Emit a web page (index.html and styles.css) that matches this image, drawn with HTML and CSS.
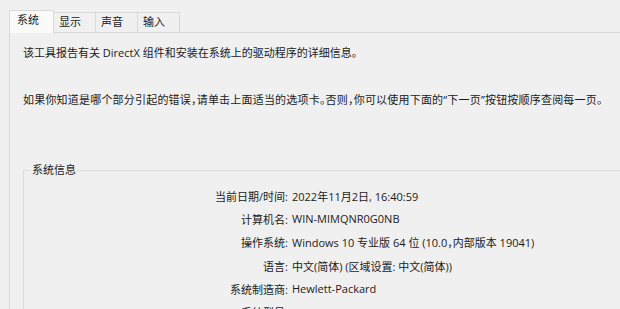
FILE: index.html
```html
<!DOCTYPE html>
<html lang="zh-CN">
<head>
    <meta charset="UTF-8">
    <title>DirectX 诊断工具</title>
    <link rel="stylesheet" href="styles.css">
</head>
<body>
    <div class="window">
        <div class="tabs">
            <div class="tab active">系统</div>
            <div class="tab">显示</div>
            <div class="tab">声音</div>
            <div class="tab">输入</div>
        </div>
        <div class="panel">
            <p class="intro">该工具报告有关 DirectX 组件和安装在系统上的驱动程序的详细信息。</p>
            <p class="intro second">如果你知道是哪个部分引起的错误，请单击上面适当的选项卡。否则，你可以使用下面的“下一页”按钮按顺序查阅每一页。</p>

            <fieldset class="group">
                <legend>系统信息</legend>
                <div class="info">
                    <span class="label">当前日期/时间:</span><span class="value">2022年11月2日, 16:40:59</span>
                    <span class="label">计算机名:</span><span class="value">WIN-MIMQNR0G0NB</span>
                    <span class="label">操作系统:</span><span class="value">Windows 10 专业版 64 位 (10.0，内部版本 19041)</span>
                    <span class="label">语言:</span><span class="value">中文(简体) (区域设置: 中文(简体))</span>
                    <span class="label">系统制造商:</span><span class="value">Hewlett-Packard</span>
                    <span class="label">系统型号:</span><span class="value">HP ProDesk 400 G1 MT</span>
                </div>
            </fieldset>
        </div>
    </div>
</body>
</html>
```

FILE: styles.css
```css
* {
    box-sizing: border-box;
    margin: 0;
    padding: 0;
}

html,
body {
    height: 100%;
    overflow: hidden;
}

body {
    background-color: #f0f0f0;
    color: #1a1a1a;
    font-family: "Open Sans", "Noto Sans CJK SC", sans-serif;
    font-feature-settings: "halt";
    font-size: 11px;
}

.window {
    padding: 10px 0 0 9px;
    width: 700px;
}

.tabs {
    align-items: flex-end;
    display: flex;
    height: 22px;
    position: relative;
    z-index: 1;
}

.tab {
    background-color: #f0f0f0;
    border: 1px solid #d9d9d9;
    border-bottom: none;
    height: 20px;
    line-height: 18px;
    padding: 0 5px;
    width: 42px;
}

.tab + .tab {
    border-left: none;
}

.tab.active {
    background-color: #fafafa;
    height: 23px;
    margin-bottom: -1px;
    padding-left: 7px;
    width: 45px;
}

.panel {
    border: 1px solid #d9d9d9;
    border-right: none;
    height: 400px;
    padding: 11px 0 0 13px;
}

.intro {
    line-height: 18px;
}

.intro.second {
    letter-spacing: 0.2px;
    margin-top: 29px;
}

.group {
    border: 1px solid #dcdcdc;
    border-right: none;
    margin-top: 54px;
    padding: 7px 0 0 0;
}

.group legend {
    line-height: 14px;
    margin-left: 7px;
    padding: 0 1px;
}

.info {
    display: grid;
    grid-auto-rows: 23.3px;
    grid-template-columns: 264px 1fr;
    column-gap: 4px;
    align-items: center;
}

.label {
    text-align: right;
}
```
